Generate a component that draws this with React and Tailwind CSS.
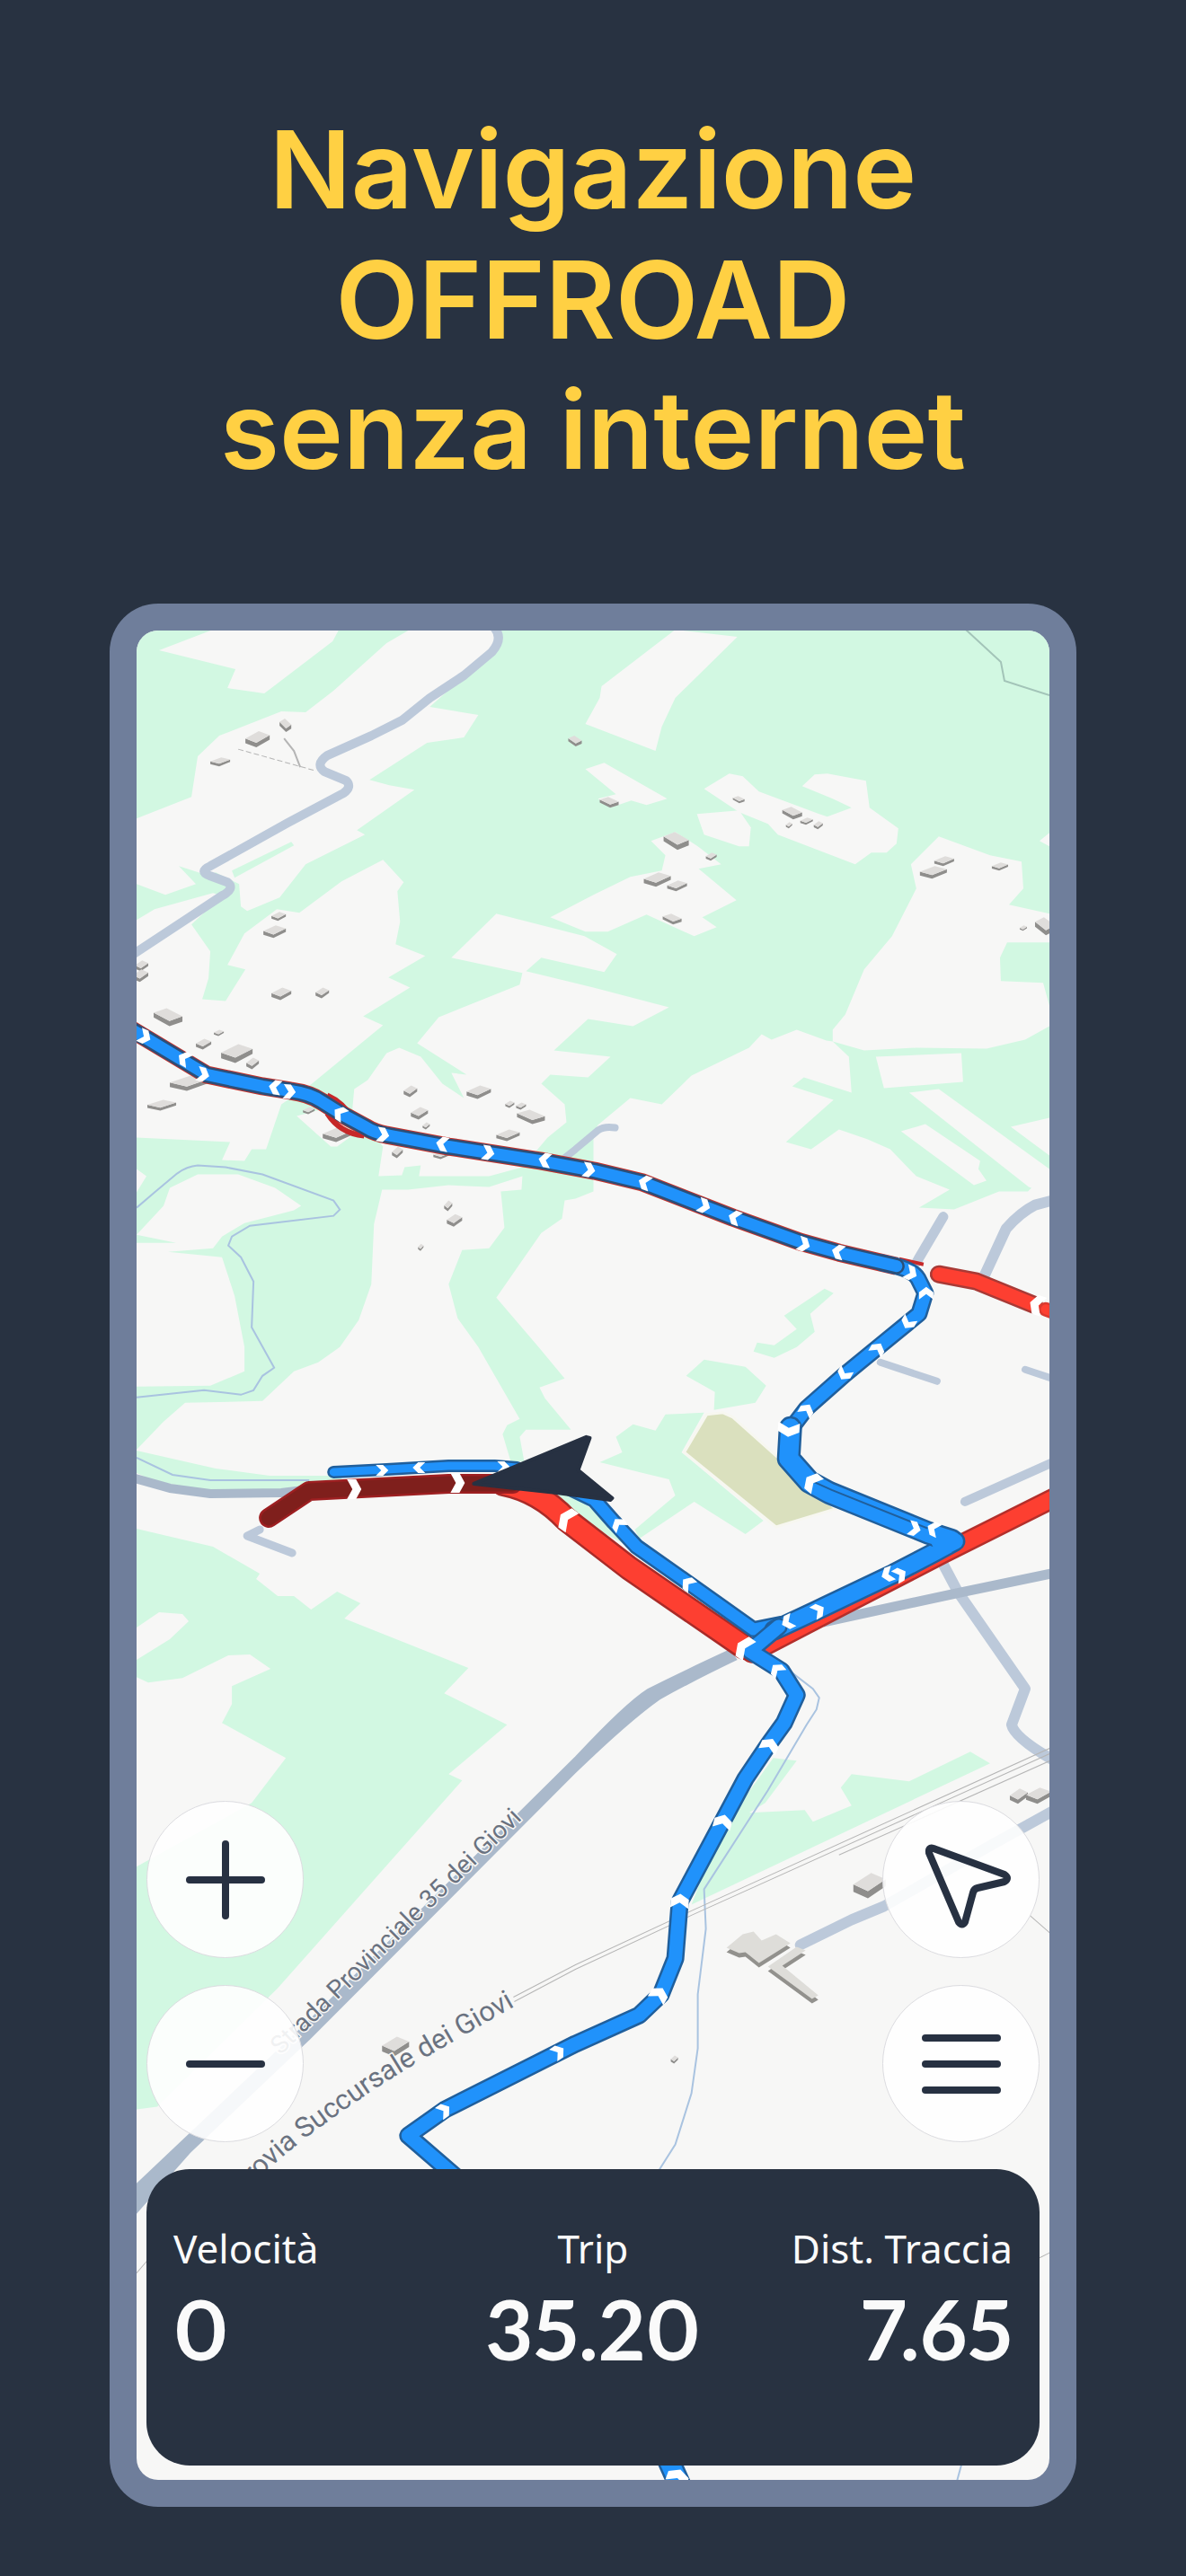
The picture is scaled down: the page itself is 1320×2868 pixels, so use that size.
import React from "react";

const PARKS_BASE =
  "152,702 1167,702 1167,1303 1143,1327 1111,1327 1061,1347 1022,1345 1056,1325 1019,1310 990,1280 965,1269 933,1258 902,1280 874,1272 927,1225 881,1210 894,1200 947,1217 944,1177 926,1160 919,1159 886,1147 858,1158 847,1152 833,1167 769,1198 736,1230 701,1223 665,1253 660,1262 660,1327 640,1335 628,1337 625,1357 602,1373 552,1445 599,1500 628,1535 600,1545 606,1557 635,1592 585,1592 578,1600 583,1627 568,1627 559,1597 564,1587 578,1580 532,1500 509,1468 499,1430 514,1392 544,1390 561,1367 557,1327 580,1325 581,1310 544,1322 499,1320 454,1325 425,1325 416,1363 413,1430 399,1470 378,1500 354,1517 327,1527 292,1560 206,1562 182,1583 152,1614";

const CLEARINGS = [
  "177,725 237,702 377,702 370,715 294,773 253,767 262,746",
  "454,703 547,702 556,712 545,728 478,788 532,797 516,822 475,828 411,869 433,875 461,880 397,925 406,930 340,963 311,1000 275,1015 268,1010 266,985 240,972 230,975 199,965 218,985 184,997 152,985 152,912 213,888 220,843 244,820 313,793 340,794 371,770 430,717",
  "152,1025 172,1013 237,995 247,998 213,1030 234,1060 232,1090 225,1113 251,1115 273,1080 253,1075 272,1040 308,1013 333,1017 380,982 426,958 449,983 442,993 445,1027 440,1052 473,1065 432,1089 456,1100 404,1132 426,1142 347,1207 313,1230 296,1280 280,1280 272,1293 247,1292 256,1272 152,1267",
  "464,1162 488,1133 578,1097 581,1084 502,1067 552,1018 650,1043 686,1063 672,1083 602,1067 585,1082 660,1100 744,1122 704,1143 654,1135 616,1170 679,1177 654,1200 612,1197 602,1207 628,1230 630,1250 609,1267 581,1300 544,1310 466,1310 468,1298 450,1300 447,1309 421,1310 426,1277 392,1235 394,1213 409,1203 430,1173 444,1167 468,1177 492,1207 516,1223 502,1195 519,1197",
  "330,1243 368,1277 375,1277 394,1263 360,1235",
  "152,1302 163,1310 152,1328",
  "152,1375 182,1343 189,1323 220,1308 265,1308 306,1323 335,1343 327,1348 272,1362 247,1377 237,1390 187,1394 247,1400 261,1443 272,1500 272,1527 234,1543 152,1544 152,1384 196,1384",
  "751,702 820,710 751,778 736,810 729,837 651,807 667,778 669,765",
  "651,857 672,850 742,890 719,897 702,892 679,900 665,890 685,885",
  "783,879 811,862 826,865 844,882 911,907 920,910 947,900 926,890 892,876 906,863 920,862 963,870 967,900 999,923 997,940 986,950 969,950 951,963 865,930 854,918 822,905",
  "775,907 822,903 835,922 833,943 822,943 783,930",
  "724,937 751,927 776,943 802,963 777,968 819,1003 781,1022 797,1033 772,1043 719,1019 676,1038 651,1038 612,1022 660,997 701,977 736,970 740,953",
  "1013,963 1044,932 1101,953 1136,960 1138,990 1122,1008 1167,1018 1167,1050 1120,1050 1112,1067 1113,1093 1160,1095 1167,1120 1167,1143 1140,1158 1097,1168 1019,1167 961,1170 926,1160 926,1147 940,1130 961,1080 992,1043 1019,990",
  "1156,937 1167,928 1167,943",
  "974,1177 1069,1173 1071,1205 983,1212",
  "1011,1217 1044,1213 1167,1302 1167,1330 1144,1322",
  "1124,1255 1167,1245 1167,1287",
  "1002,1260 1029,1252 1090,1293 1088,1302 1097,1315 1083,1320",
];

const GREENS = [
  "261,978 327,942 324,938 258,970",
  "152,1615 240,1635 300,1643 380,1643 380,1656 240,1662 170,1648 152,1640",
  "917,1435 927,1440 901,1463 906,1483 886,1500 861,1512 838,1505 842,1495 861,1498 886,1480 872,1465",
  "763,1532 783,1514 829,1522 852,1543 840,1562 794,1570 795,1550",
  "740,1575 783,1573 758,1617 849,1693 829,1708 772,1672 711,1713 706,1703 751,1665 744,1647 715,1640 667,1628 692,1617 685,1600 704,1586 729,1593",
  "600,1655 645,1670 705,1717 700,1722 640,1690",
  "152,1702 237,1722 289,1752 285,1758 309,1777 327,1777 346,1792 375,1772 401,1785 383,1802 521,1857 494,1885 564,1920 499,1975 514,1982 309,2213 175,2345 152,2348",
  "860,1957 886,1960 851,2007 833,2018 895,2015 904,2028 947,2010 935,1990 947,1975 1011,1983 1079,1950 1101,1963 769,2120 800,2040",
];

const FIELDS = [
  "152,1812 177,1795 203,1797 210,1805 189,1825 152,1848",
  "152,1867 165,1873 203,1868 254,1843 278,1842 301,1858 258,1877 258,1897 247,1918 318,1957 280,2007 152,2078",
];

const RIVERS = [
  "M152 1345 172 1328 197 1307Q208 1299 220 1298L251 1300 292 1308 371 1337 378 1347 371 1354 278 1365 258 1377 254 1387 268 1400 282 1427 280 1478 305 1523 292 1532 282 1548 268 1553 227 1548 152 1556",
  "M152 1623 192 1642 234 1648 344 1648",
  "M852 1840 904 1880 911 1890 908 1903 897 1920 854 1993 783 2103 785 2147 776 2220 776 2280 769 2330 751 2387 730 2420",
  "M1070 2740 1064 2762",
];

const ROADS = [
  ["M550 700Q560 712 547 727L516 753 478 778 447 803 413 820 364 842Q350 852 361 860L385 870Q392 877 382 884L320 917 234 965Q220 971 234 976L253 983Q262 990 247 998L150 1062", 10],
  ["M620 1296 640 1280 665 1259Q672 1254 684 1256", 8],
  ["M1019 1406 1049 1355", 11],
  ["M1094 1422 1119 1368Q1135 1350 1151 1342L1170 1337", 12],
  ["M979 1517 1042 1538", 8],
  ["M1140 1525 1170 1535", 8],
  ["M1073 1672 1169 1629", 10],
  ["M1047 1738 1065 1772 1140 1880 1125 1920Q1128 1934 1169 1958", 12],
  ["M289 1703 275 1710 325 1729", 9],
  ["M890 2165 947 2137 983 2122 1104 2053 1169 2017", 12],
];

const DARK_ROADS = [
  ["M150 1646 189 1657 234 1663 313 1662 370 1655", 10],
  ["M915 1806 1058 1775 1169 1752", 11],
];

const RAILS = [
  "M571 2223 640 2187 769 2127 1168 1946",
  "M572 2228 640 2192 769 2132 1168 1952",
  "M933 2065 1168 1960",
  "M1145 2132 1168 2152",
  "M152 2530 164 2516",
  "M1156 2513 1168 2507",
];

const BUILDINGS = [
  [234, 844, 22, 10], [273, 815, 27, 18], [311, 801, 13, 15, 1], [302, 1016, 16, 10], [293, 1031, 25, 14],
  [150, 1070, 15, 12], [148, 1080, 17, 14], [632, 820, 15, 12, 1], [667, 888, 21, 12, 1], [815, 887, 13, 8, 1],
  [870, 899, 22, 14, 1], [890, 911, 14, 8], [905, 915, 10, 9], [874, 916, 7, 7], [738, 927, 28, 20, 1],
  [785, 950, 12, 9], [716, 972, 30, 16], [742, 981, 22, 12], [737, 1018, 21, 12, 1], [1039, 954, 22, 11],
  [1023, 965, 30, 14], [1103, 961, 18, 9], [1134, 1031, 8, 6], [1151, 1022, 22, 20, 1], [302, 1100, 22, 14],
  [351, 1100, 15, 12], [171, 1123, 32, 20, 1], [218, 1157, 17, 12], [238, 1147, 11, 7], [246, 1163, 35, 21],
  [274, 1178, 14, 13], [189, 1198, 42, 17], [164, 1225, 32, 12], [337, 1233, 13, 8], [359, 1255, 33, 17],
  [449, 1209, 15, 13], [457, 1233, 19, 14], [470, 1250, 8, 8], [519, 1209, 27, 15], [562, 1226, 10, 8],
  [574, 1228, 11, 8], [575, 1236, 31, 16, 1], [552, 1258, 26, 13], [436, 1277, 12, 13], [482, 1282, 18, 9],
  [494, 1337, 9, 12], [497, 1352, 17, 14], [465, 1385, 6, 8], [425, 2267, 30, 22], [949, 2085, 36, 28],
  [1123, 1991, 20, 17], [1141, 1990, 28, 18], [746, 2288, 8, 9],
];

const UPPER = "M140 1143 230 1197 292 1210 323 1215Q345 1218 358 1227L382 1242 406 1255Q417 1262 430 1264L499 1277 602 1293 661 1304 715 1317 779 1342 815 1356 890 1383 933 1395 997 1410";
const TURN = "M980 1406 997 1410Q1016 1415 1021 1424L1029 1440 1022 1463 979 1498 940 1530 897 1568 878 1593";
const BEND = "M879 1590 877 1624 900 1650 922 1662 1033 1707 1058 1715";
const BACK = "M1034 1706 1062 1716 1040 1728 994 1752 908 1793 861 1815";
const SIDE = "M630 1655 661 1670 683 1695 708 1722 765 1762 838 1814 868 1808";
const LOWER = "M866 1811 834 1838 869 1860 886 1887 872 1918 854 1943 829 1980 804 2027 756 2117 751 2180 735 2220 711 2243 640 2275 495 2348 454 2377 550 2460";
const START = "M371 1639 430 1636 499 1632 550 1632 575 1634";

const CHEVRONS = [
  [161, 1155, 25], [205, 1179, 210], [226, 1197, 15], [306, 1211, 190], [322, 1216, 5], [378, 1240, 215],
  [426, 1264, 10], [492, 1274, 190], [543, 1284, 10], [606, 1292, 190], [655, 1303, 10], [717, 1317, 200],
  [783, 1343, 20], [817, 1356, 200], [894, 1386, 20], [932, 1394, 195], [1013, 1418, 25], [1030, 1440, 270],
  [1010, 1473, 120], [976, 1502, 300], [939, 1530, 120], [897, 1570, 300], [877, 1592, 95, 12],
  [903, 1650, 220, 11], [1017, 1702, 15], [1038, 1702, 205], [987, 1753, 160], [1001, 1753, -30],
  [910, 1793, -30], [876, 1806, 155], [688, 1697, 235], [765, 1763, 220], [864, 1859, 230],
  [856, 1943, 295, 10], [804, 2028, 285, 10], [756, 2116, 275, 10], [733, 2220, 300, 10], [621, 2284, 325],
  [494, 2349, 325], [425, 1637, 0, 6], [466, 1634, 180, 6], [560, 1633, 0, 6], [394, 1658, 0, 11],
  [509, 1651, 0, 11], [630, 1691, 215, 13], [827, 1834, 215, 13], [1153, 1453, 200, 11], [754, 2756, 290, 12],
];

function Building({ x, y, w, h, flip }) {
  const px = (f) => (flip ? x + w - f * w : x + f * w);
  const a = `${px(0)},${y + h * 0.45}`;
  const b = `${px(0.45)},${y + h * 0.72}`;
  const c = `${px(1)},${y + h * 0.25}`;
  return (
    <g>
      <polygon fill="#8f8e8c" points={`${a} ${b} ${c} ${px(1)},${y + h * 0.52} ${px(0.45)},${y + h} ${px(0)},${y + h * 0.75}`} />
      <polygon fill="#dfdddb" points={`${a} ${px(0.55)},${y} ${c} ${b}`} />
    </g>
  );
}

function Chevron({ x, y, angle, half = 8 }) {
  const t = half > 9 ? 5 : 4;
  return (
    <polygon
      fill="#fff"
      transform={`translate(${x} ${y}) rotate(${angle})`}
      points={`${-t - 3},${-half} ${t - 3},${-half} ${t + 3},0 ${t - 3},${half} ${-t - 3},${half} ${-t + 3},0`}
    />
  );
}

function Track({ d, width, edge = "#205f9c", fill = "#2092fb" }) {
  return (
    <g fill="none" strokeLinecap="round" strokeLinejoin="round">
      <path d={d} stroke={edge} strokeWidth={width} />
      <path d={d} stroke={fill} strokeWidth={width - 5} />
    </g>
  );
}

function MapView() {
  return (
    <svg className="absolute inset-0 h-full w-full" viewBox="152 702 1015 2059" preserveAspectRatio="xMidYMid slice" role="img" aria-label="Mappa del percorso">
      <rect x="150" y="700" width="1020" height="2064" fill="#f7f7f6" />
      <polygon points={PARKS_BASE} fill="#d2f8e2" />
      {CLEARINGS.map((p) => <polygon key={p} points={p} fill="#f7f7f6" />)}
      {GREENS.map((p) => <polygon key={p} points={p} fill="#d2f8e2" />)}
      {FIELDS.map((p) => <polygon key={p} points={p} fill="#f7f7f6" />)}
      <polygon points="804,1573 815,1578 929,1680 863,1700 761,1617 786,1575" fill="#dae0be" stroke="#f7f7f0" strokeWidth="3" />

      <g fill="none" stroke="#a9c3e0" strokeWidth="2">
        {RIVERS.map((d) => <path key={d} d={d} />)}
      </g>
      <g fill="none" stroke="#bcc9da" strokeLinecap="round" strokeLinejoin="round">
        {ROADS.map(([d, w]) => <path key={d} d={d} strokeWidth={w} />)}
      </g>
      <g fill="none" stroke="#aab9cb" strokeLinejoin="round">
        {DARK_ROADS.map(([d, w]) => <path key={d} d={d} strokeWidth={w} />)}
      </g>
      <path d="M812 1836Q760 1860 720 1880Q695 1896 640 1955L340 2252 152 2430V2464L212 2396 345 2270 640 1974Q700 1916 734 1892Q770 1872 820 1848Z" fill="#aab9cb" />
      <g fill="none" stroke="#b5b5b5" strokeWidth="1">
        {RAILS.map((d) => <path key={d} d={d} />)}
        <path d="M316 823 327 837 334 855" strokeWidth="2" />
        <path d="M265 835 351 859" strokeDasharray="6 3" />
        <path d="M1074 702 1113 738 1117 759 1167 775" stroke="#a3c4b8" strokeWidth="2" />
      </g>

      {BUILDINGS.map(([x, y, w, h, flip]) => <Building key={`${x}-${y}`} x={x} y={y} w={w} h={h} flip={flip} />)}
      <g>
        <polygon transform="translate(0 5)" fill="#92918d" points="808,2168 826,2153 838,2150 847,2160 863,2153 879,2163 844,2185 829,2173 822,2174" />
        <polygon fill="#deddd9" points="808,2168 826,2153 838,2150 847,2160 863,2153 879,2163 844,2185 829,2173 822,2174" />
        <polygon transform="translate(0 5)" fill="#92918d" points="854,2189 886,2167 896,2171 870,2188 910,2221 903,2225" />
        <polygon fill="#deddd9" points="854,2189 886,2167 896,2171 870,2188 910,2221 903,2225" />
      </g>

      <defs>
        <path id="road-label" d="M312 2288 450 2153 592 2014" />
        <path id="rail-label" d="M190 2530Q240 2468 292 2421Q330 2384 400 2337Q440 2308 573 2233" />
      </defs>
      <g fontFamily="Roboto, sans-serif" fill="#6a7280" stroke="#f7f7f6" strokeWidth="3" paintOrder="stroke">
        <text fontSize="28"><textPath href="#road-label">Strada Provinciale 35 dei Giovi</textPath></text>
        <text fontSize="31" textAnchor="end"><textPath href="#rail-label" startOffset="100%">Ferrovia Succursale dei Giovi</textPath></text>
      </g>

      <g fill="none" strokeLinejoin="round">
        <path d={UPPER} stroke="#c9332b" strokeWidth="20" />
        <path d="M364 1220Q382 1228 392 1246M364 1240Q378 1262 405 1265" stroke="#c62828" strokeWidth="6" />
        <path d="M1000 1402 1027 1408" stroke="#c62828" strokeWidth="4" />
      </g>
      <Track d="M1044 1419 1086 1427 1150 1453" width={20} fill="#fd3f31" edge="#a83a36" />
      <Track d="M1163 1458 1180 1464" width={16} fill="#fd3f31" edge="#d93a30" />
      <Track d="M836 1840 905 1804 1048 1730 1180 1664" width={23} fill="#fd3f31" edge="#b32f2b" />
      <Track d="M560 1652Q600 1660 630 1692L700 1746 828 1834" width={28} fill="#fd3f31" edge="#a92b28" />
      <Track d="M299 1690 344 1660 382 1658 499 1652 570 1652" width={22} fill="#7f1f1c" edge="#9d1f21" />

      <Track d={START} width={14} />
      <Track d={SIDE} width={18} />
      <Track d={TURN} width={19} />
      <Track d={UPPER} width={18} edge="#2b4f78" />
      <Track d={BACK} width={23} />
      <Track d={BEND} width={26} />
      <path d="M905 1650 925 1659 1045 1707" fill="none" stroke="#205f9c" strokeWidth="2" />
      <path d="M1030 1706 1062 1716 1040 1727" fill="none" stroke="#2092fb" strokeWidth="18" strokeLinejoin="round" />
      <Track d={LOWER} width={20} />
      <Track d="M740 2730 760 2775" width={26} />
      {CHEVRONS.map(([x, y, angle, half]) => <Chevron key={`${x}-${y}`} x={x} y={y} angle={angle} half={half} />)}

      <path d="M527 1652 652 1600 656 1601 643 1637 681 1668 679 1670 619 1662Z" fill="#273142" stroke="#273142" strokeWidth="4" strokeLinejoin="round" />
    </svg>
  );
}

function RoundButton({ label, children }) {
  return (
    <button type="button" aria-label={label} className="flex size-[175px] items-center justify-center rounded-full border border-[#dcdce0] bg-white/90 text-[#273142]">
      <svg className="size-24 overflow-visible" viewBox="0 0 96 96" fill="none" stroke="currentColor" strokeWidth="8" strokeLinecap="round" strokeLinejoin="round" aria-hidden="true">
        {children}
      </svg>
    </button>
  );
}

function Stat({ label, value, className = "" }) {
  return (
    <div className={className}>
      <dt className="font-['Noto_Sans',sans-serif] text-[44px] leading-[60px]">{label}</dt>
      <dd className="font-['Lato',sans-serif] text-[92px] font-bold leading-[120px] proportional-nums">{value}</dd>
    </div>
  );
}

export default function App() {
  return (
    <main className="flex min-h-screen flex-col bg-[#283241] px-[122px] pt-[116px] pb-[77px]">
      <h1 className="text-center font-['Inter',sans-serif] text-[120px] leading-[145px] font-semibold text-[#ffd043]">
        Navigazione
        <br />
        OFFROAD
        <br />
        senza internet
      </h1>

      <section className="mt-[121px] rounded-[54px] bg-[#6f7e9b] p-[30px]">
        <div className="relative flex aspect-[1016/2059] flex-col justify-end overflow-hidden rounded-3xl px-[11px] pb-4">
          <MapView />
          <div className="relative flex justify-between">
            <div className="flex flex-col gap-[30px]">
              <RoundButton label="Ingrandisci">
                <path d="M48 8v80M8 48h80" />
              </RoundButton>
              <RoundButton label="Riduci">
                <path d="M8 48h80" />
              </RoundButton>
            </div>
            <div className="flex flex-col gap-[30px]">
              <RoundButton label="Posizione">
                <path d="M17 13 96 42Q102 46 96 50L66 57Q62 58 61 62L52 95Q49 100 45 95L12 18Q11 11 17 13Z" />
              </RoundButton>
              <RoundButton label="Menu">
                <path d="M8 19h80M8 48h80M8 77h80" />
              </RoundButton>
            </div>
          </div>
          <dl className="relative mt-[30px] grid h-[330px] grid-cols-3 rounded-[48px] bg-[#283241] px-[30px] pt-[58px] text-[#fafafa]">
            <Stat label="Velocità" value="0" />
            <Stat label="Trip" value="35.20" className="text-center" />
            <Stat label="Dist. Traccia" value="7.65" className="text-right" />
          </dl>
        </div>
      </section>
    </main>
  );
}
